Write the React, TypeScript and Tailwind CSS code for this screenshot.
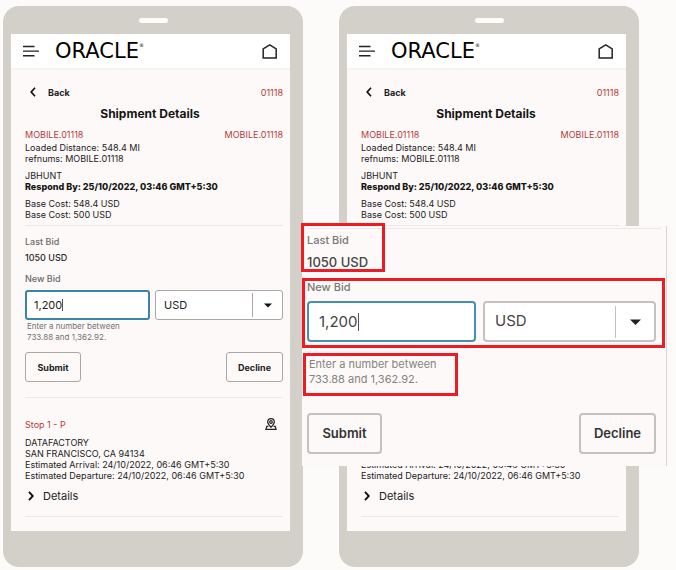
import { useId } from "react";

const OracleLogo = () => {
  return (
    <span className="flex items-start font-['DejaVu_Sans',sans-serif] text-black">
      <span className="text-[21px] leading-5">ORACLE</span>
      <span className="text-[5px] leading-2">®</span>
    </span>
  );
};

const MenuIcon = () => (
  <svg width="16" height="12" viewBox="0 0 16 12" fill="none" stroke="#222" strokeWidth="1.4">
    <path d="M0 1.5H11.5M0 6.1H16M0 10.7H11.5" />
  </svg>
);

const HomeIcon = () => (
  <svg width="15" height="15" viewBox="0 0 15 15" fill="none" stroke="#222" strokeWidth="1.5">
    <path d="M1.2 4.8L7.7 .9L14.2 4.8V14H1.2Z" />
  </svg>
);

const PinIcon = () => (
  <svg width="12" height="12" viewBox="0 0 12 12" fill="none" stroke="#222" strokeWidth="1.2">
    <path d="M6 9.2C4.3 7.6 2.7 6 2.7 4A3.3 3.3 0 0 1 9.3 4C9.3 6 7.7 7.6 6 9.2Z" />
    <circle cx="6" cy="4" r="1.3" />
    <path d="M3.4 8.4H1.8L.9 11.3H11.1L10.2 8.4H8.6" />
  </svg>
);

const LeftChevron = () => (
  <svg width="6" height="10" viewBox="0 0 6 10" fill="none" stroke="#111" strokeWidth="1.7">
    <path d="M5 .8L1.2 5L5 9.2" />
  </svg>
);

const RightChevron = () => (
  <svg width="6" height="10" viewBox="0 0 6 10" fill="none" stroke="#111" strokeWidth="1.9">
    <path d="M1 .8L4.8 5L1 9.2" />
  </svg>
);

const Divider = () => <hr className="border-t border-[#ebe8e6]" />;

const BidForm = () => {
  const id = useId();
  return (
    <form className="mt-2.5">
      <p className="text-[9px] leading-3 font-medium text-[#6b6866]">Last Bid</p>
      <p className="mt-1 text-[9px] leading-3 font-medium text-[#2b2928]">1050 USD</p>
      <label
        htmlFor={id + "amount"}
        className="mt-[9px] block text-[9px] leading-3 font-medium text-[#6b6866]"
      >
        New Bid
      </label>
      <div className="mt-[5px] grid grid-cols-[125fr_128fr] gap-[5px]">
        <div className="flex h-[30px] min-w-0 items-center rounded-[3px] border-2 border-[#3b84a3] bg-white pl-[7px]">
          <input
            id={id + "amount"}
            defaultValue="1,200"
            className="field-sizing-content text-[11px] leading-4 text-[#222] outline-none"
          />
          <span className="h-3 w-px bg-[#555]" />
        </div>
        <div className="flex h-[30px] min-w-0 items-center rounded-[3px] border border-[#aaa7a5] bg-white">
          <select
            aria-label="Currency"
            className="h-full min-w-0 flex-1 appearance-none pl-2 text-[11px] text-[#222] outline-none"
          >
            <option>USD</option>
          </select>
          <span className="flex h-6 w-[30px] items-center justify-center border-l border-[#aaa7a5]">
            <svg width="8" height="5" viewBox="0 0 8 5" fill="#111">
              <path d="M0 .5H8L4 4.5Z" />
            </svg>
          </span>
        </div>
      </div>
      <p className="mt-px w-[110px] pl-0.5 text-[8px] leading-[11px] text-[#75716f]">
        Enter a number between 733.88 and 1,362.92.
      </p>
      <div className="mt-[9px] flex justify-between">
        <button
          type="button"
          className="h-[30px] w-14 rounded-[3px] border border-[#aaa7a5] text-[9px] font-bold text-[#222]"
        >
          Submit
        </button>
        <button
          type="button"
          className="h-[30px] w-[57px] rounded-[3px] border border-[#aaa7a5] text-[9px] font-bold text-[#222]"
        >
          Decline
        </button>
      </div>
    </form>
  );
};

const Phone = () => {
  return (
    <div className="rounded-[16px] bg-[#d3cfc9] pt-3 pb-9">
      <div className="flex justify-center pl-[1px]">
        <div className="h-[5px] w-[29px] rounded-full bg-[#fdfcfa]" />
      </div>
      <div className="mt-[11px] mr-[13px] ml-2 bg-[#fdf9f8] pb-3.5 text-[9px] leading-[11px] text-[#222]">
        <header className="flex h-9 items-center border-b-2 border-[#f5f3f2] bg-white pr-[13px] pl-3">
          <button type="button" aria-label="Menu">
            <MenuIcon />
          </button>
          <div className="ml-4 flex-1">
            <OracleLogo />
          </div>
          <a href="#" aria-label="Home">
            <HomeIcon />
          </a>
        </header>
        <main className="pt-3 pr-[7px] pl-3.5">
          <div className="flex h-5 items-center justify-between">
            <button
              type="button"
              className="flex items-center gap-3 pl-[5px] font-bold text-[#222]"
            >
              <LeftChevron />
              Back
            </button>
            <span className="text-[#b13c40]">01118</span>
          </div>
          <h1 className="mt-0.5 pr-2 text-center text-[12px] leading-5 font-bold text-[#161513]">
            Shipment Details
          </h1>
          <div className="mt-1 flex justify-between leading-[14px] text-[#b13c40]">
            <span>MOBILE.01118</span>
            <span>MOBILE.01118</span>
          </div>
          <p>Loaded Distance: 548.4 MI</p>
          <p>refnums: MOBILE.01118</p>
          <p className="mt-1.5">JBHUNT</p>
          <p className="font-extrabold text-[#161513]">Respond By: 25/10/2022, 03:46 GMT+5:30</p>
          <p className="mt-1.5">Base Cost: 548.4 USD</p>
          <p className="mb-[5px]">Base Cost: 500 USD</p>
          <Divider />
          <BidForm />
          <div className="mt-[15px] mb-5">
            <Divider />
          </div>
          <div className="flex h-3 items-center justify-between pr-1.5 text-[#b13c40]">
            <h2>Stop 1 - P</h2>
            <PinIcon />
          </div>
          <p className="mt-[7px]">DATAFACTORY</p>
          <p>SAN FRANCISCO, CA 94134</p>
          <p>Estimated Arrival: 24/10/2022, 06:46 GMT+5:30</p>
          <p>Estimated Departure: 24/10/2022, 06:46 GMT+5:30</p>
          <button
            type="button"
            className="mt-[7px] mb-3 flex h-4 items-center gap-[9px] pl-[3px] text-[11px] text-[#222]"
          >
            <RightChevron />
            Details
          </button>
          <Divider />
        </main>
      </div>
    </div>
  );
};

// enlarged view of the bid form, laid over the second phone
const BidCallout = () => {
  const id = useId();
  return (
    <form className="absolute top-[220px] right-[-28px] left-[-37px] border-r border-[#d8d6d4] bg-[#fdf9f8] pb-3">
      <div className="mx-[5px] pt-0.5">
        <Divider />
      </div>
      <div className="-mt-1.5 -ml-px h-[49px] w-[84px] border-3 border-[#ed1c24] pt-1.5 pl-[3px]">
        <p className="text-[11px] leading-4 font-medium text-[#7a7775]">Last Bid</p>
        <p className="mt-1.5 text-[13px] leading-4 font-medium text-[#444]">1050 USD</p>
      </div>
      <div className="mt-1.5 mr-px h-[70px] border-3 border-[#ed1c24] pr-1.5 pl-0.5">
        <label
          htmlFor={id + "amount"}
          className="block text-[11px] leading-3 font-medium text-[#7a7775]"
        >
          New Bid
        </label>
        <div className="mt-2 grid grid-cols-[169fr_173fr] gap-[7px]">
          <div className="flex h-[41px] min-w-0 items-center rounded-[4px] border-2 border-[#4590ad] bg-white pl-2.5">
            <input
              id={id + "amount"}
              defaultValue="1,200"
              className="field-sizing-content text-[15px] leading-5 text-[#444] outline-none"
            />
            <span className="h-[18px] w-px bg-[#555]" />
          </div>
          <div className="flex h-[41px] min-w-0 items-center rounded-[4px] border-2 border-[#c4c2c0] bg-white">
            <select
              aria-label="Currency"
              className="h-full min-w-0 flex-1 appearance-none pl-2.5 text-[15px] text-[#444] outline-none"
            >
              <option>USD</option>
            </select>
            <span className="flex h-8 w-[39px] items-center justify-center border-l border-[#c4c2c0]">
              <svg width="11" height="6" viewBox="0 0 11 6" fill="#222">
                <path d="M0 .5H11L5.5 6Z" />
              </svg>
            </span>
          </div>
        </div>
      </div>
      <div className="mt-[5px] ml-px h-[43px] w-[155px] border-3 border-[#ed1c24] pl-[3px]">
        <p className="mt-px text-[11px] leading-[15px] text-[#858280]">
          Enter a number between 733.88 and 1,362.92.
        </p>
      </div>
      <div className="mt-[17px] flex justify-between pr-2.5 pl-[5px]">
        <button
          type="button"
          className="h-[41px] w-[75px] rounded-[4px] border-2 border-[#c4c2c0] text-[13px] font-semibold text-[#333]"
        >
          Submit
        </button>
        <button
          type="button"
          className="h-[41px] w-[77px] rounded-[4px] border-2 border-[#c4c2c0] text-[13px] font-semibold text-[#333]"
        >
          Decline
        </button>
      </div>
    </form>
  );
};

const App = () => {
  return (
    <div className="min-h-screen bg-[#fcfbf9] pt-1.5 pr-[37px] pb-[3px] pl-[3px] font-['Inter',sans-serif]">
      <div className="grid grid-cols-2 gap-9">
        <Phone />
        <div className="relative">
          <Phone />
          <BidCallout />
        </div>
      </div>
    </div>
  );
};

export default App;
